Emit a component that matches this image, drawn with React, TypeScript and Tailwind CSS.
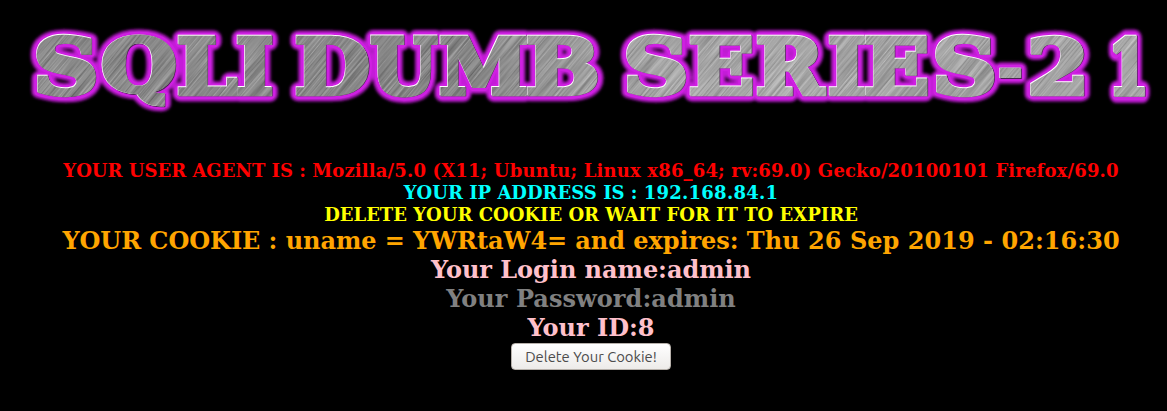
import React from "react";

type Glyph = { ch: string; x1: number; x2: number; y1: number; y2: number };

const TOP = 35.5;
const BASE = 96;

const g = (ch: string, x1: number, x2: number, y1 = TOP, y2 = BASE): Glyph => ({ ch, x1, x2, y1, y2 });

const TITLE: Glyph[] = [
  g("S", 36.5, 96.5, 33.5, 97.5), g("Q", 101.5, 175.5, 33.5, 107.5), g("L", 178.5, 238), g("I", 237.5, 272),
  g("D", 296.5, 369), g("U", 370.5, 438.5, 35.5, 97.5), g("M", 439.5, 527), g("B", 527.7, 598),
  g("S", 626.5, 686.5, 33.5, 97.5), g("E", 690.5, 753), g("R", 757.5, 827), g("I", 829.5, 865),
  g("E", 865.7, 928), g("S", 935.5, 995, 33.5, 97.5), g("-", 999.5, 1022, 68.5, 80),
  g("2", 1030.5, 1084, 34.5, 96), g("1", 1112.5, 1146),
];

const STROKE = 4.8;
const FACE = '"DejaVu Serif", serif';

// Scales each letter so that its stroked ink fills its box in the banner.
function fit(items: Glyph[]) {
  const ctx = document.createElement("canvas").getContext("2d")!;
  ctx.font = `bold 1000px ${FACE}`;
  return items.map((it) => {
    const m = ctx.measureText(it.ch);
    const inset = it.ch === "-" ? 1 : STROKE / 2;
    const left = m.actualBoundingBoxLeft / 10;
    const ascent = m.actualBoundingBoxAscent / 10;
    const w = m.actualBoundingBoxRight / 10 + left;
    const h = m.actualBoundingBoxDescent / 10 + ascent;
    const sx = (it.x2 - it.x1 - inset * 2) / w;
    const sy = (it.y2 - it.y1 - inset * 2) / h;
    const tx = it.x1 + inset + left * sx;
    const ty = it.y1 + inset + ascent * sy;
    return { ch: it.ch, stroke: inset * 2, transform: `translate(${tx} ${ty}) scale(${sx} ${sy})` };
  });
}

function Letters({ items, color, extra = 0 }: { items: ReturnType<typeof fit>; color: string; extra?: number }) {
  return (
    <g
      fill={color}
      stroke={color}
      strokeLinejoin={extra ? "round" : "miter"}
      strokeMiterlimit="1.6"
      fontFamily={FACE}
      fontWeight="bold"
      fontSize="100"
    >
      {items.map((l, i) => (
        <text key={i} transform={l.transform} strokeWidth={l.stroke + extra} vectorEffect="non-scaling-stroke">
          {l.ch}
        </text>
      ))}
    </g>
  );
}

function Banner() {
  const items = React.useMemo(() => fit(TITLE), []);
  return (
    <svg className="block h-[160px] w-[1167px] shrink-0" viewBox="0 0 1167 160" role="img" aria-label="SQLI DUMB SERIES-2 1">
      <defs>
        <filter id="glow" x="0" y="0" width="1167" height="160" filterUnits="userSpaceOnUse">
          <feGaussianBlur stdDeviation="1.8" />
        </filter>
        <filter id="grain" x="-200" y="-900" width="1700" height="1900" filterUnits="userSpaceOnUse" colorInterpolationFilters="sRGB">
          <feTurbulence type="fractalNoise" baseFrequency="0.015 0.6" numOctaves="2" seed="4" />
          <feColorMatrix values="1.4 0 0 0 -0.16  1.4 0 0 0 -0.16  1.4 0 0 0 -0.16  0 0 0 0 0.28" />
        </filter>
        <linearGradient id="metal" gradientUnits="userSpaceOnUse" x1="0" y1="0" x2="1167" y2="0">
          <stop offset="0" stopColor="#8a8a8a" />
          <stop offset=".25" stopColor="#8a8a8a" />
          <stop offset=".4" stopColor="#828282" />
          <stop offset=".5" stopColor="#a4a4a4" />
          <stop offset=".66" stopColor="#b4b4b4" />
          <stop offset=".8" stopColor="#a6a6a6" />
          <stop offset="1" stopColor="#b6b6b6" />
        </linearGradient>
        <mask id="face" maskUnits="userSpaceOnUse" x="0" y="0" width="1167" height="160">
          <Letters items={items} color="#fff" />
        </mask>
      </defs>
      <g filter="url(#glow)">
        <Letters items={items} color="#c41bd8" extra={11} />
      </g>
      <Letters items={items} color="#cf20e2" extra={6} />
      <g transform="translate(.6 .4)"><Letters items={items} color="#4b2352" /></g>
      <g transform="translate(-.6 -.6)"><Letters items={items} color="#fff" /></g>
      <g mask="url(#face)">
        <rect width="1167" height="160" fill="url(#metal)" />
        <g transform="rotate(-50 583 70)">
          <rect x="-100" y="-600" width="1400" height="1400" filter="url(#grain)" />
        </g>
      </g>
    </svg>
  );
}

export default function App() {
  return (
    <main className="h-[411px] w-[1167px] overflow-hidden bg-black">
      <Banner />
      <div className="flex w-[1182px] flex-col items-center whitespace-nowrap font-['DejaVu_Serif',serif] font-bold">
        <p className="text-[18px] leading-[22px] text-[#ff0000]">
          YOUR USER AGENT IS :{" "}
          <span className="tracking-[0.15px]">Mozilla/5.0 (X11; Ubuntu; Linux x86_64; rv:69.0) Gecko/20100101 Firefox/69.0</span>
        </p>
        <p className="text-[18px] leading-[22px] text-[#00ffff]">
          YOUR IP ADDRESS IS : <span className="tracking-[0.25px]">192.168.84.1</span>
        </p>
        <p className="text-[18px] leading-[22px] text-[#ffff00]">DELETE YOUR COOKIE OR WAIT FOR IT TO EXPIRE</p>
        <p className="text-[24px] leading-[29px] text-[#ffa500]">
          <span className="tracking-[-0.06px]">YOUR COOKIE : uname = YWRtaW4= and expires: </span>
          <span className="tracking-[0.03px]">Thu 26 Sep 2019 - 02:16:30</span>
        </p>
        <p className="text-[24px] leading-[29px] tracking-[-0.04px] text-[#ffc0cb]">Your Login name:admin</p>
        <p className="text-[24px] leading-[29px] tracking-[0.05px] text-[#808080]">Your Password:admin</p>
        <p className="text-[24px] leading-[29px] text-[#ffc0cb]">Your ID:8</p>
        <button className="mt-px flex h-[27px] w-[160px] items-center justify-center rounded-[4px] border border-[#b6b0aa] bg-linear-to-b from-white to-[#edebe9] pt-0.5 font-['Ubuntu','Noto_Sans',sans-serif] text-[14.8px] font-normal text-[#4c4c4c]">
          Delete Your Cookie!
        </button>
      </div>
    </main>
  );
}
